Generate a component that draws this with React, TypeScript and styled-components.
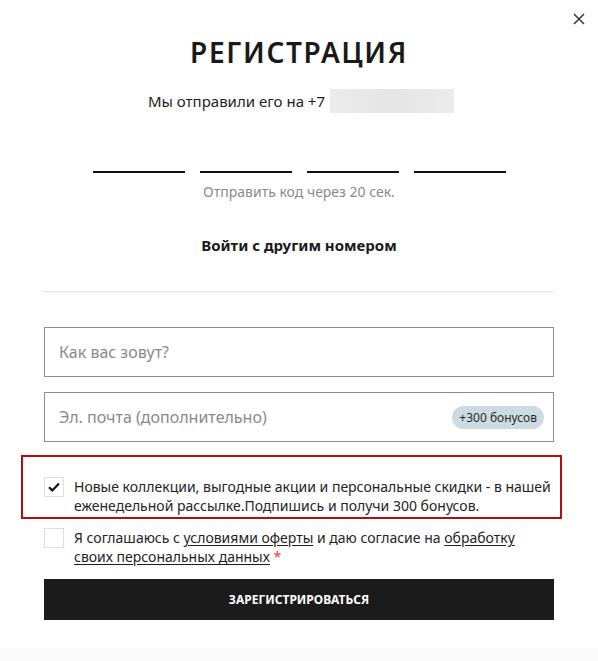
import { createGlobalStyle, styled } from 'styled-components'

const GlobalStyle = createGlobalStyle`
  html, body {
    margin: 0;
    padding: 0;
    background: #fafafa;
  }
  * {
    box-sizing: border-box;
  }
  body {
    font-family: 'Noto Sans', 'Open Sans', sans-serif;
    color: #1d1d1d;
  }
`

const Page = styled.div`
  min-height: 661px;
  background: #fafafa;
`
const Modal = styled.div`
  position: relative;
  width: 598px;
  height: 648px;
  background: #fff;
  padding: 35px 44px 28px;
  display: flex;
  flex-direction: column;
`
const CloseBtn = styled.button`
  position: absolute;
  top: 12px;
  right: 12px;
  width: 14px;
  height: 14px;
  padding: 0;
  border: 0;
  background: none;
  display: flex;
  align-items: center;
  justify-content: center;
  cursor: pointer;
`
const Title = styled.h1`
  margin: 0;
  font-size: 28px;
  line-height: 34px;
  font-weight: 600;
  letter-spacing: 1.6px;
  text-align: center;
  color: #1a1a1a;
`
const SentRow = styled.div`
  margin-top: 20px;
  display: flex;
  justify-content: center;
  align-items: center;
  gap: 5px;
  font-size: 15px;
  line-height: 20px;
  padding-left: 4px;
`
const HiddenPhone = styled.span`
  display: block;
  width: 124px;
  height: 24px;
  background: linear-gradient(90deg, #ececec, #e4e4e4 50%, #ececec);
`
const CodeRow = styled.div`
  margin-top: 16px;
  display: flex;
  justify-content: center;
  gap: 15px;
`
const CodeCell = styled.input`
  width: 92px;
  height: 44px;
  border: 0;
  border-bottom: 2px solid #111;
  outline: none;
  background: transparent;
  font-size: 24px;
  text-align: center;
`
const Resend = styled.div`
  margin-top: 10px;
  font-size: 14px;
  line-height: 18px;
  text-align: center;
  color: #8a8a8a;
`
const OtherNumber = styled.div`
  margin-top: 34px;
  font-size: 15px;
  line-height: 20px;
  font-weight: 700;
  text-align: center;
  color: #1a1a1a;
`
const Divider = styled.hr`
  margin: 36px 0 0;
  border: 0;
  border-top: 1px solid #e2e2e2;
`
const Fields = styled.div`
  margin-top: 35px;
  display: flex;
  flex-direction: column;
  gap: 15px;
`
const Field = styled.label`
  height: 50px;
  border: 1px solid #8c8c8c;
  display: flex;
  align-items: center;
  padding: 0 9px 0 14px;
`
const FieldInput = styled.input`
  flex: 1;
  border: 0;
  outline: none;
  font-family: inherit;
  font-size: 16px;
  color: #1d1d1d;
  background: transparent;
  padding: 0;

  &::placeholder {
    color: #8a8a8a;
  }
`
const Bonus = styled.span`
  height: 23px;
  padding: 0 7px;
  border-radius: 12px;
  background: #ccdbe2;
  font-size: 12px;
  line-height: 23px;
  color: #2a2a2a;
  white-space: nowrap;
`
const Highlight = styled.div`
  margin: 13px -8px 0 -23px;
  padding: 20px 6px 2px 21px;
  border: 2px solid #b50d0d;
`
const CheckRow = styled.label<{ $top?: number }>`
  margin-top: ${(p) => p.$top ?? 0}px;
  display: flex;
  align-items: flex-start;
  gap: 10px;
  font-size: 14px;
  line-height: 19px;
  color: #232323;
  cursor: pointer;
`
const Box = styled.span`
  flex: 0 0 20px;
  width: 20px;
  height: 20px;
  border: 1px solid #dedede;
  display: flex;
  align-items: center;
  justify-content: center;
`
const CheckText = styled.span`
  flex: 1;
`
const TextLink = styled.a`
  color: #1d1d1d;
  text-decoration: underline;
  text-underline-offset: 2px;
`
const Required = styled.span`
  color: #e8423a;
`
const Submit = styled.button`
  margin-top: 13px;
  height: 41px;
  width: 100%;
  border: 0;
  background: #1b1b1b;
  color: #fff;
  font-family: inherit;
  font-size: 12px;
  font-weight: 700;
  cursor: pointer;
`

function CheckIcon() {
  return (
    <svg width="12" height="10" viewBox="0 0 12 10" fill="none">
      <path d="M1 5.2 4.3 8.4 11 1.4" stroke="#111" strokeWidth="2.2" />
    </svg>
  )
}

export default function App() {
  return (
    <Page>
      <GlobalStyle />
      <Modal>
        <CloseBtn aria-label="Закрыть">
          <svg width="12" height="12" viewBox="0 0 12 12">
            <path d="M1 1l10 10M11 1 1 11" stroke="#3a3a3a" strokeWidth="1.6" />
          </svg>
        </CloseBtn>

        <Title>РЕГИСТРАЦИЯ</Title>
        <SentRow>
          <span>Мы отправили его на +7</span>
          <HiddenPhone />
        </SentRow>

        <CodeRow>
          {[0, 1, 2, 3].map((i) => (
            <CodeCell key={i} maxLength={1} />
          ))}
        </CodeRow>
        <Resend>Отправить код через 20 сек.</Resend>
        <OtherNumber>Войти с другим номером</OtherNumber>

        <Divider />

        <Fields>
          <Field>
            <FieldInput placeholder="Как вас зовут?" />
          </Field>
          <Field>
            <FieldInput placeholder="Эл. почта (дополнительно)" />
            <Bonus>+300 бонусов</Bonus>
          </Field>
        </Fields>

        <Highlight>
          <CheckRow>
            <Box>
              <CheckIcon />
            </Box>
            <CheckText>
              Новые коллекции, выгодные акции и персональные скидки - в нашей
              еженедельной рассылке.Подпишись и получи 300 бонусов.
            </CheckText>
          </CheckRow>
        </Highlight>

        <CheckRow $top={9}>
          <Box />
          <CheckText>
            Я соглашаюсь с <TextLink>условиями оферты</TextLink> и даю согласие на{' '}
            <TextLink>обработку своих персональных данных</TextLink> <Required>*</Required>
          </CheckText>
        </CheckRow>

        <Submit>ЗАРЕГИСТРИРОВАТЬСЯ</Submit>
      </Modal>
    </Page>
  )
}
